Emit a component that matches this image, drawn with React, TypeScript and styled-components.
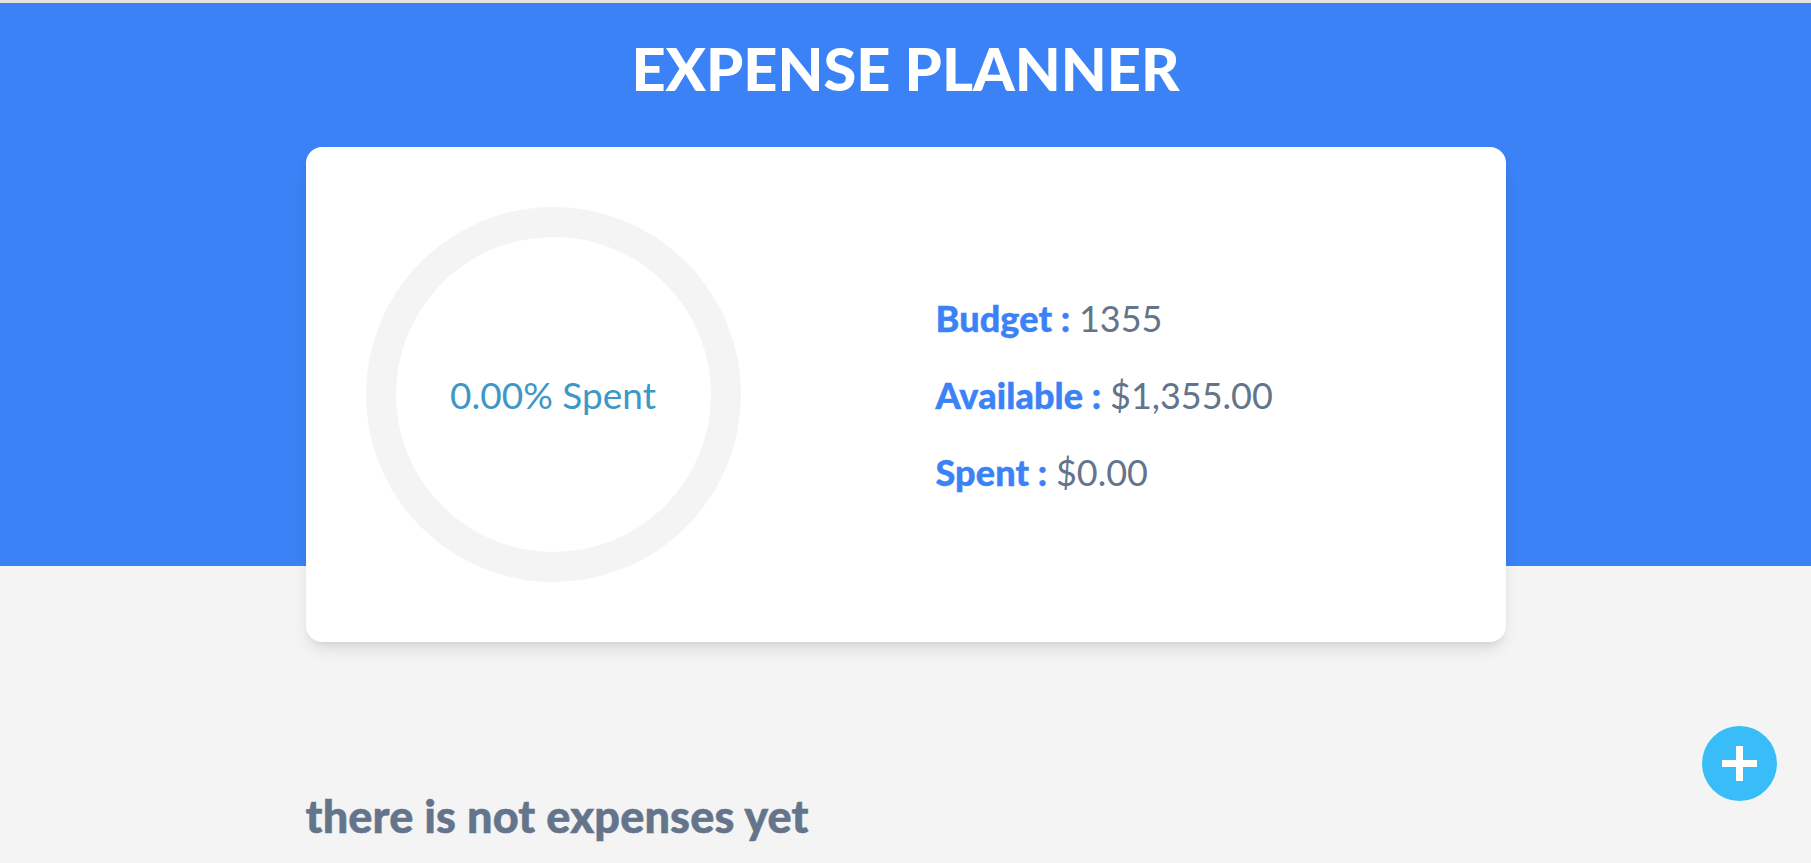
import React from "react";
import styled, { createGlobalStyle } from "styled-components";

const GlobalStyle = createGlobalStyle`
  * { box-sizing: border-box; }
  html, body { margin: 0; padding: 0; }
  body {
    background: #f4f4f4;
    font-family: Lato, "Open Sans", sans-serif;
  }
`;

const Header = styled.header`
  background: #3b82f6;
  border-top: 3px solid #e2e2e2;
  padding: 29px 16px 0;
  height: 566px;
`;

const Title = styled.h1`
  margin: 0;
  text-align: center;
  color: #ffffff;
  font-size: 59.5px;
  line-height: 72px;
  font-weight: 900;
  letter-spacing: 0;
`;

const Card = styled.section`
  max-width: 1200px;
  margin: 43px auto 0;
  background: #ffffff;
  border-radius: 16px;
  box-shadow: 0 10px 15px -3px rgba(0, 0, 0, 0.1), 0 4px 6px -4px rgba(0, 0, 0, 0.1);
  padding: 60px;
  display: flex;
  align-items: center;
  gap: 195px;
`;

const Ring = styled.div`
  position: relative;
  width: 375px;
  height: 375px;
  flex: none;
`;

const RingSvg = styled.svg`
  display: block;
  width: 375px;
  height: 375px;
`;

const RingLabel = styled.div`
  position: absolute;
  inset: 0;
  display: flex;
  align-items: center;
  justify-content: center;
  color: #3e98c7;
  font-size: 37px;
  font-weight: 400;
`;

const Stats = styled.div`
  display: flex;
  flex-direction: column;
  gap: 37px;
`;

const StatLine = styled.p`
  margin: 0;
  font-size: 36px;
  line-height: 40px;
  color: #64748b;
  font-weight: 400;
`;

const StatLabel = styled.span`
  color: #3b82f6;
  font-weight: 900;
  letter-spacing: 0.1px;
  -webkit-text-stroke: 0.4px currentColor;
`;

const Main = styled.main`
  max-width: 1200px;
  margin: 0 auto;
  padding-top: 224px;
`;

const Empty = styled.h2`
  margin: 0;
  font-size: 45px;
  line-height: 53px;
  font-weight: 900;
  letter-spacing: 0.15px;
  color: #64748b;
  -webkit-text-stroke: 0.5px currentColor;
`;

const Fab = styled.button`
  position: fixed;
  right: 34px;
  bottom: 62px;
  width: 75px;
  height: 75px;
  border-radius: 50%;
  border: none;
  padding: 0;
  background: #38bdf8;
  display: flex;
  align-items: center;
  justify-content: center;
  cursor: pointer;
`;

export default function App() {
  const r = 172.5;
  return (
    <>
      <GlobalStyle />
      <Header>
        <Title>EXPENSE PLANNER</Title>
        <Card>
          <Ring>
            <RingSvg viewBox="0 0 375 375">
              <circle cx="187.5" cy="187.5" r={r} fill="none" stroke="#f4f4f4" strokeWidth="30" />
            </RingSvg>
            <RingLabel>0.00% Spent</RingLabel>
          </Ring>
          <Stats>
            <StatLine>
              <StatLabel>Budget : </StatLabel>1355
            </StatLine>
            <StatLine>
              <StatLabel>Available : </StatLabel>$1,355.00
            </StatLine>
            <StatLine>
              <StatLabel>Spent : </StatLabel>$0.00
            </StatLine>
          </Stats>
        </Card>
      </Header>
      <Main>
        <Empty>there is not expenses yet</Empty>
      </Main>
      <Fab aria-label="New expense">
        <svg width="35" height="35" viewBox="0 0 35 35">
          <rect x="14" y="0" width="7" height="35" fill="#ffffff" />
          <rect x="0" y="14" width="35" height="7" fill="#ffffff" />
        </svg>
      </Fab>
    </>
  );
}
